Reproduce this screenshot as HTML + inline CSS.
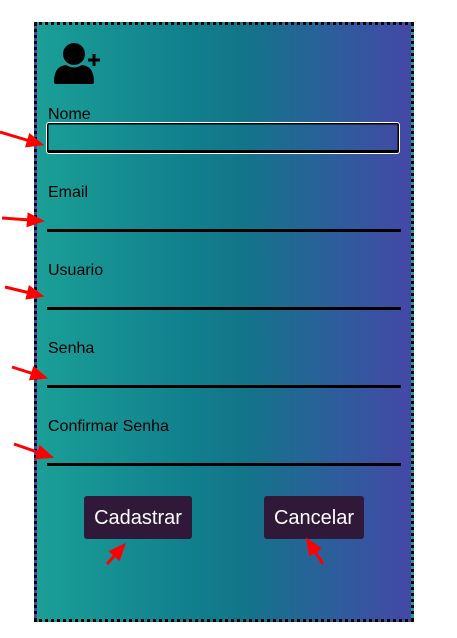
<!DOCTYPE html>
<html><head><style>
body{margin:0;width:457px;height:638px;background:#fff;position:relative;font-family:"Liberation Sans",sans-serif;overflow:hidden}
.box{position:absolute;left:34px;top:22px;width:374px;height:594px;border:3px dotted #000;background:linear-gradient(90deg,#1a9f97 0%,#11808d 40%,#127589 55%,#2d5d9c 80%,#4448a6 100%)}
.lbl{position:absolute;left:48px;font-size:16px;color:#000}
.line{position:absolute;left:47px;width:354px;height:3px;background:#000}
.btn{position:absolute;top:496px;height:43px;background:#301838;color:#fff;font-size:20px;line-height:45px;text-align:center;border-radius:3px}
</style></head><body>
<div class="box"></div>
<svg style="position:absolute;left:52px;top:42px" width="50" height="44" viewBox="0 0 50 44">
<circle cx="22" cy="12" r="11" fill="#000"/>
<path d="M2 40 Q2 24 14 23 Q22 28 30 23 Q42 24 42 40 Q42 42 40 42 L4 42 Q2 42 2 40Z" fill="#000"/>
<path d="M42 12v12M36 18h12" stroke="#000" stroke-width="3"/>
</svg>
<div class="lbl" style="top:106px">Nome</div>
<div style="position:absolute;left:46px;top:122px;width:352px;height:30px;border:1.5px solid #fff;border-radius:3px;box-shadow:inset 0 -3px 0 #000,inset 0 0 0 1.5px #000"></div>
<div class="lbl" style="top:184px">Email</div><div class="line" style="top:229px"></div>
<div class="lbl" style="top:262px">Usuario</div><div class="line" style="top:307px"></div>
<div class="lbl" style="top:340px">Senha</div><div class="line" style="top:385px"></div>
<div class="lbl" style="top:418px">Confirmar Senha</div><div class="line" style="top:463px"></div>
<div class="btn" style="left:84px;width:108px">Cadastrar</div>
<div class="btn" style="left:264px;width:100px">Cancelar</div>
<svg style="position:absolute;left:0;top:0" width="457" height="638">
<defs><marker id="a" markerWidth="6" markerHeight="5" refX="1" refY="2.5" orient="auto"><path d="M0 0L6 2.5L0 5Z" fill="#f00"/></marker></defs>
<g stroke="#f00" stroke-width="3" marker-end="url(#a)">
<line x1="0" y1="132" x2="30" y2="141"/>
<line x1="2" y1="218" x2="30" y2="220"/>
<line x1="5" y1="287" x2="30" y2="293"/>
<line x1="12" y1="367" x2="34" y2="374"/>
<line x1="14" y1="444" x2="40" y2="453"/>
<line x1="107" y1="564" x2="116" y2="554"/>
<line x1="323" y1="564" x2="314" y2="550"/>
</g></svg>
</body></html>
